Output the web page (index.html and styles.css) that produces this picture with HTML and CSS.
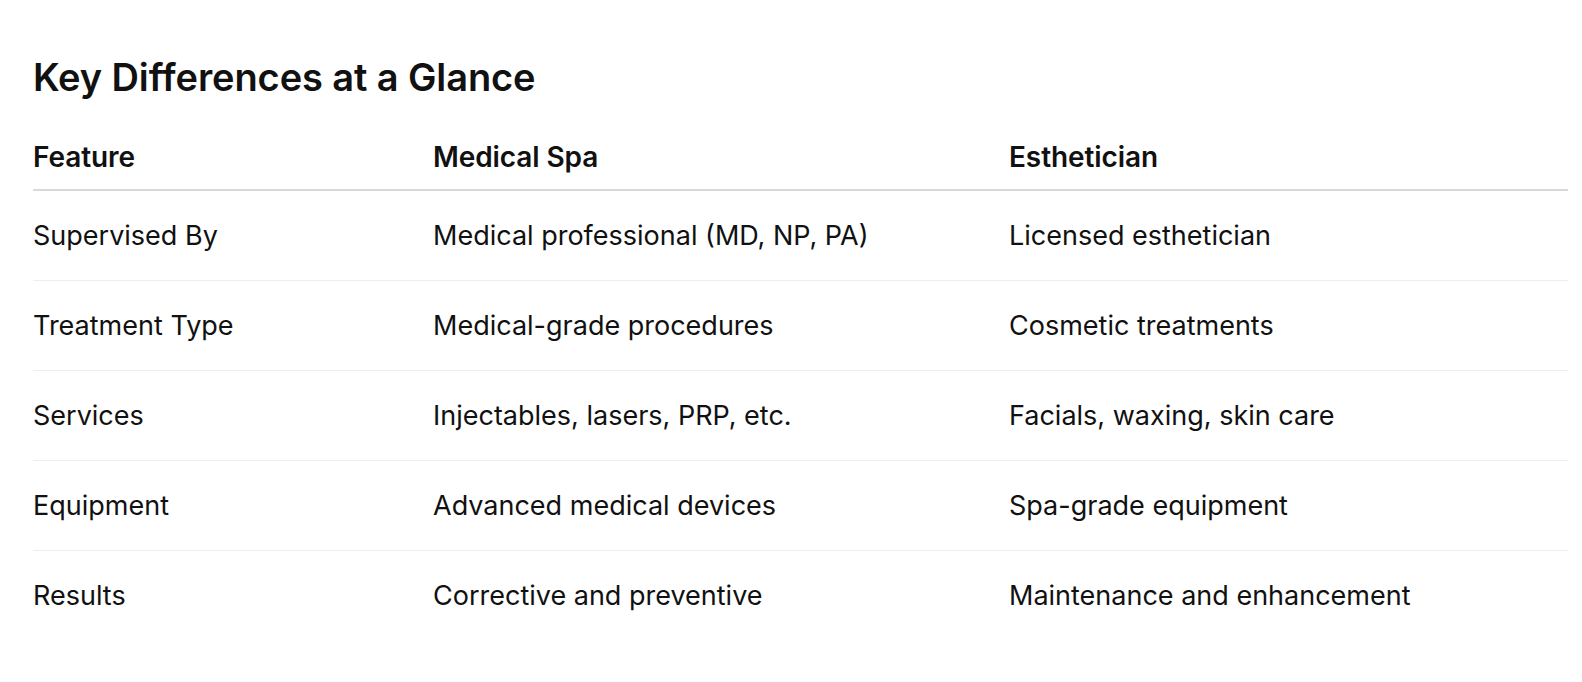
FILE: index.html
```html
<!DOCTYPE html>
<html>
<head>
<meta charset="utf-8">
<link rel="stylesheet" href="styles.css">
</head>
<body>
<main class="page">
  <h2 class="title">Key Differences at a Glance</h2>
  <table class="compare">
    <colgroup>
      <col class="c1"><col class="c2"><col class="c3">
    </colgroup>
    <thead>
      <tr><th>Feature</th><th>Medical Spa</th><th>Esthetician</th></tr>
    </thead>
    <tbody>
      <tr><td>Supervised By</td><td>Medical professional (MD, NP, PA)</td><td>Licensed esthetician</td></tr>
      <tr><td>Treatment Type</td><td>Medical-grade procedures</td><td>Cosmetic treatments</td></tr>
      <tr><td>Services</td><td>Injectables, lasers, PRP, etc.</td><td>Facials, waxing, skin care</td></tr>
      <tr><td>Equipment</td><td>Advanced medical devices</td><td>Spa-grade equipment</td></tr>
      <tr><td>Results</td><td>Corrective and preventive</td><td>Maintenance and enhancement</td></tr>
    </tbody>
  </table>
</main>
</body>
</html>
```
FILE: styles.css
```css
html, body {
  margin: 0;
  padding: 0;
  background: #ffffff;
}
body {
  font-family: Inter, "Noto Sans", sans-serif;
  color: #111111;
}
.page {
  padding: 54px 14px 40px 33px;
}
.title {
  margin: 0 0 25px 0;
  font-size: 38px;
  font-weight: 600;
  line-height: 46px;
  letter-spacing: -0.1px;
}
.compare {
  width: 100%;
  border-collapse: collapse;
  table-layout: fixed;
}
.c1 { width: 400px; }
.c2 { width: 576px; }
.c3 { width: auto; }
.compare th {
  text-align: left;
  font-weight: 600;
  font-size: 28px;
  line-height: 34px;
  letter-spacing: -0.1px;
  padding: 15px 0 15px 0;
  border-bottom: 2px solid #d9d9d9;
}
.compare td {
  font-size: 27px;
  line-height: 34px;
  padding: 28px 0 27px 0;
  border-bottom: 1px solid #eeeeee;
}
.compare tbody tr:last-child td {
  border-bottom: none;
}
```
